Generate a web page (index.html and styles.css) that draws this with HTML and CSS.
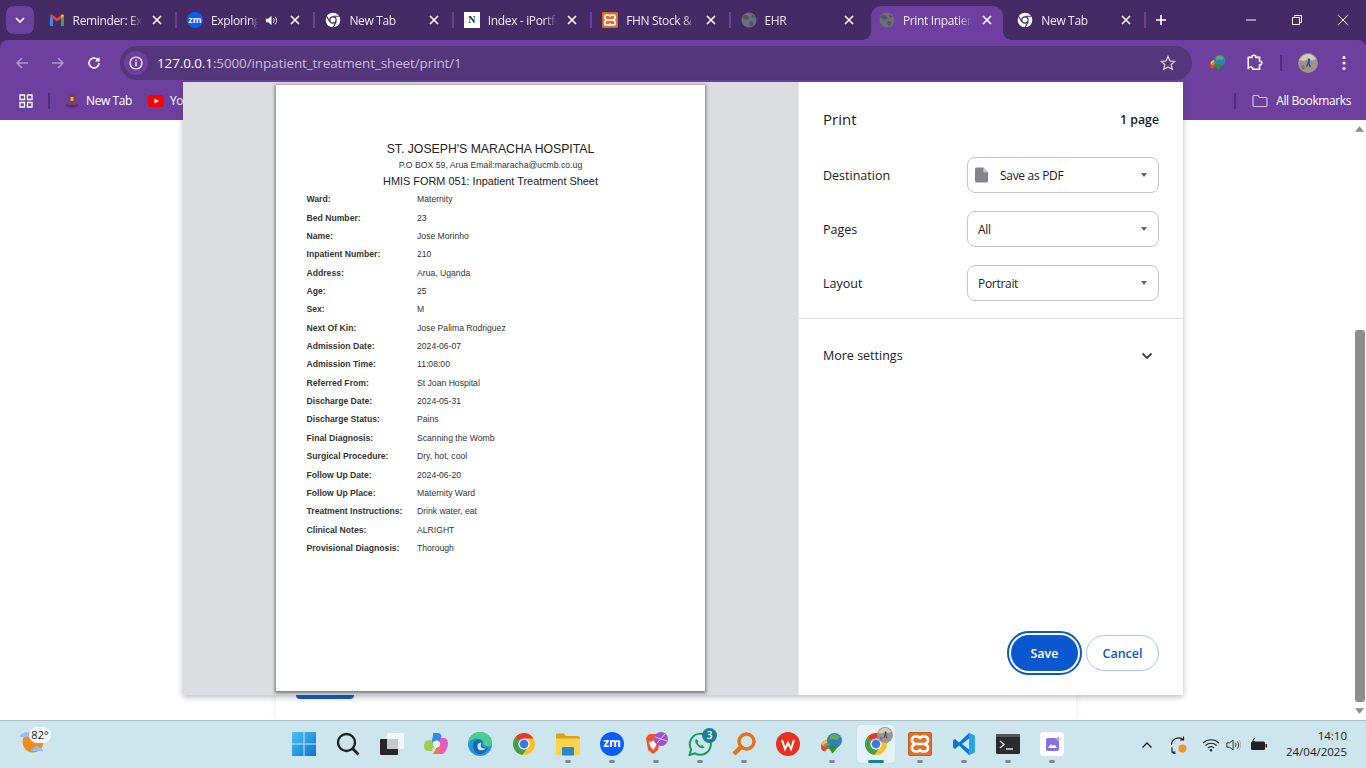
FILE: index.html
```html
<!doctype html>
<html>
 <head>
  <meta charset="UTF-8">
  <title>Print Inpatient Treatment Sheet</title>
  <link rel="stylesheet" href="styles.css">
 </head>
 <body>
  <svg class="defs" width="0" height="0">
   <defs>
    <symbol id="x" viewBox="0 0 12 12"><path d="M2 2l8 8M10 2l-8 8" stroke="currentColor" stroke-width="1.6" fill="none"/></symbol>
    <symbol id="chromeMono" viewBox="0 0 24 24">
     <circle cx="12" cy="12" r="11" fill="#fff"/>
     <path d="M12 6.500h10M7.200 14.800L2.200 6M16.800 14.800l-5 8.700" stroke="#452b66" stroke-width="1.600"/>
     <circle cx="12" cy="12" r="5.600" fill="#452b66"/><circle cx="12" cy="12" r="3.800" fill="#fff"/>
    </symbol>
    <symbol id="chromeColor" viewBox="0 0 24 24">
     <circle cx="12" cy="12" r="11" fill="#fbc02d"/>
     <path d="M12 12L7.240 9.250 3.470 5.100A11 11 0 0 1 21.530 6.500H12z" fill="#e53935"/>
     <path d="M12 12L7.240 9.250 3.470 5.100A11 11 0 0 0 10.400 22.900L14.750 16.760z" fill="#43a047"/>
     <circle cx="12" cy="12" r="5.600" fill="#fff"/><circle cx="12" cy="12" r="4.400" fill="#3b78e7"/>
    </symbol>
    <symbol id="globe" viewBox="0 0 16 16">
     <circle cx="8" cy="8" r="7.500" fill="#6b6f76"/>
     <path d="M4 2.500l3 1.500 1.500 2-2 1.500L3 7 1.500 5.500zM9 9l3.500 1-1 3.500-2 1L8 11zM11 2.500l2.500 2L12 6l-2-1.500z" fill="#452b66" opacity=".45"/>
    </symbol>
    <symbol id="xampp" viewBox="0 0 24 24">
     <rect width="24" height="24" rx="2" fill="#e0702a"/>
     <rect x=".5" y=".5" width="23" height="23" rx="2" fill="none" stroke="#c25d1c"/>
     <path d="M7.500 4.500h1.500c1.800 0 3 1 3 2.800 0-1.800 1.200-2.800 3-2.800h1.500c2 0 3.500 1.500 3.500 3.500 0 2-1.200 3.200-3 4 1.800.8 3 2 3 4 0 2-1.500 3.500-3.500 3.500H15c-1.800 0-3-1-3-2.800 0 1.800-1.200 2.800-3 2.800H7.500C5.500 19.500 4 18 4 16c0-2 1.200-3.200 3-4-1.800-.8-3-2-3-4 0-2 1.500-3.500 3.500-3.500z" fill="none" stroke="#fff" stroke-width="2.500"/>
     <path d="M7.500 12h9" stroke="#fff" stroke-width="2.500"/>
    </symbol>
    <symbol id="idm" viewBox="0 0 24 24">
     <path d="M1 15c0-4 2.500-6.500 6-7l2 9c-2-.5-3.500.5-3.500 2.500C3 19.500 1 18 1 15z" fill="#e5413a"/>
     <path d="M1.800 12c1-2.300 2.800-3.600 5.200-4l.7 3c-2 .2-3.700 1.400-4.400 3.200z" fill="#f6c02c"/>
     <path d="M3.400 14c.7-1.800 2.300-3 4.300-3l.6 2.600c-1.600 0-3 .8-3.400 2.200z" fill="#6db33f"/>
     <circle cx="14.500" cy="8.500" r="7.500" fill="#2f7fc4"/>
     <path d="M10 3.500c3-2 7.500-1.500 10 1.800L17 8l-4-1-3.500 1.500z" fill="#63ad4c"/>
     <path d="M7 13.500h12l-6.500 8z" fill="#23962f"/>
    </symbol>
    <symbol id="avatar" viewBox="0 0 20 20">
     <circle cx="10" cy="10" r="10" fill="#9c958c"/>
     <path d="M1 7c3-4 6-6 9-6 3 0 6 2 8 5l-5 2-3-2-4 2z" fill="#d6c9bd"/>
     <path d="M10.500 5l1.500 1-.5 4 1.500 4h-1.500l-1-3-1.500 3-1-1 1.500-3z" fill="#3d4668"/>
     <path d="M12 6.500l2.500 2-2 2.500z" fill="#5b9bd5"/>
     <path d="M3 13l3-1 1 4-2 1z" fill="#7d746b"/>
    </symbol>
   </defs>
  </svg>

  <!-- tabs -->
  <div class="tabstrip">
   <div class="tabsearch"><svg width="10" height="6" viewBox="0 0 10 6"><path d="M1 1l4 4 4-4" stroke="#fff" stroke-width="1.600" fill="none"/></svg></div>
   <div class="tab">
    <svg class="favicon" viewBox="0 0 16 16"><path d="M1 14V4l3 2v8z" fill="#4285f4"/><path d="M12 14V6l3-2v10z" fill="#34a853"/><path d="M1 4c0-1.500 1.600-2 2.500-1.300L8 6.200l4.500-3.500C13.400 2 15 2.500 15 4l-3 2.400-4 3-4-3z" fill="#ea4335"/><path d="M12 6.400V3.200l.5-.5C13.400 2 15 2.500 15 4z" fill="#fbbc04"/></svg>
    <span class="tabtitle">Reminder: Expiring</span>
    <svg class="close"><use href="#x"/></svg>
   </div>
   <div class="tab">
    <span class="favicon zm">zm</span>
    <span class="tabtitle short">Exploring the</span>
    <svg class="sound" viewBox="0 0 14 14"><path d="M1 5h2.500L7 2v10L3.500 9H1z" fill="#fff"/><path d="M9 4.500c1.200 1.400 1.200 3.600 0 5M11 3c2 2.200 2 5.800 0 8" stroke="#fff" fill="none"/></svg>
    <svg class="close"><use href="#x"/></svg>
   </div>
   <div class="tab">
    <svg class="favicon"><use href="#chromeMono"/></svg>
    <span class="tabtitle">New Tab</span>
    <svg class="close"><use href="#x"/></svg>
   </div>
   <div class="tab">
    <span class="favicon notion">N</span>
    <span class="tabtitle">Index - iPortfolio</span>
    <svg class="close"><use href="#x"/></svg>
   </div>
   <div class="tab">
    <svg class="favicon"><use href="#xampp"/></svg>
    <span class="tabtitle">FHN Stock &amp; Sales</span>
    <svg class="close"><use href="#x"/></svg>
   </div>
   <div class="tab nosep">
    <svg class="favicon"><use href="#globe"/></svg>
    <span class="tabtitle">EHR</span>
    <svg class="close"><use href="#x"/></svg>
   </div>
   <div class="tab active nosep">
    <svg class="favicon"><use href="#globe"/></svg>
    <span class="tabtitle">Print Inpatient</span>
    <svg class="close"><use href="#x"/></svg>
   </div>
   <div class="tab">
    <svg class="favicon"><use href="#chromeMono"/></svg>
    <span class="tabtitle">New Tab</span>
    <svg class="close"><use href="#x"/></svg>
   </div>
   <svg class="newtab" viewBox="0 0 12 12"><path d="M6 1v10M1 6h10" stroke="#fff" stroke-width="1.600"/></svg>
   <div class="winctl">
    <svg viewBox="0 0 12 12"><path d="M1 6h10" stroke="#fff"/></svg>
    <svg viewBox="0 0 12 12"><path d="M1.500 3.500h7v7h-7zM3.500 3.500v-2h7v7h-2" stroke="#fff" fill="none"/></svg>
    <svg viewBox="0 0 12 12"><path d="M1 1l10 10M11 1L1 11" stroke="#fff"/></svg>
   </div>
  </div>

  <!-- address bar -->
  <div class="toolbar">
   <svg class="tool dim" viewBox="0 0 14 14"><path d="M13 7H2M7 2L2 7l5 5" stroke="#fff" stroke-width="1.500" fill="none"/></svg>
   <svg class="tool dim" viewBox="0 0 14 14"><path d="M1 7h11M7 2l5 5-5 5" stroke="#fff" stroke-width="1.500" fill="none"/></svg>
   <svg class="tool" viewBox="0 0 14 14"><path d="M12 7a5 5 0 1 1-1.500-3.600L12 5" stroke="#fff" stroke-width="1.600" fill="none"/><path d="M12.500 1v4.500H8z" fill="#fff"/></svg>
   <div class="omnibox">
    <span class="siteinfo"><svg width="14" height="14" viewBox="0 0 14 14"><circle cx="7" cy="7" r="6" stroke="#fff" stroke-width="1.200" fill="none"/><path d="M7 6v4.200M7 3.600v1.300" stroke="#fff" stroke-width="1.300"/></svg></span>
    <span class="url"><b>127.0.0.1</b>:5000/inpatient_treatment_sheet/print/1</span>
    <svg class="star" viewBox="0 0 16 16"><path d="M8 1.500l2 4.400 4.700.5-3.500 3.200 1 4.700L8 11.900 3.800 14.300l1-4.700L1.300 6.400 6 5.900z" stroke="#d8d0e2" stroke-width="1.300" fill="none"/></svg>
   </div>
   <svg class="ext idmicon"><use href="#idm"/></svg>
   <svg class="ext puzzle" viewBox="0 0 16 16"><path d="M1.500 3.500h3.200c0-2.600 3.600-2.600 3.600 0h3.200v3.200c2.600 0 2.600 3.600 0 3.600v3.700H5.500c0-1.500-1-2-2-2-.8 0-2 .3-2 2z" stroke="#fff" stroke-width="1.400" fill="none" transform="translate(.5 -.5)"/></svg>
   <i class="vsep"></i>
   <svg class="avatar"><use href="#avatar"/></svg>
   <svg class="dots" viewBox="0 0 4 16"><circle cx="2" cy="2.500" r="1.500" fill="#fff"/><circle cx="2" cy="8" r="1.500" fill="#fff"/><circle cx="2" cy="13.500" r="1.500" fill="#fff"/></svg>
  </div>

  <!-- bookmarks -->
  <div class="bookmarks">
   <svg class="apps" viewBox="0 0 14 14"><path d="M1 1h4.500v4.500H1zM8.500 1H13v4.500H8.500zM1 8.500h4.500V13H1zM8.500 8.500H13V13H8.500z" stroke="#fff" stroke-width="1.300" fill="none"/></svg>
   <i class="vsep bm"></i>
   <svg class="bmicon" viewBox="0 0 16 16"><path d="M5 3l3-2 3 2v7l-3 2-3-2z" fill="#8c3b3b"/><path d="M6.500 4h3v4h-3z" fill="#e0b040"/><path d="M1.500 13c3 2 10 2 13 0l-1-2c-3 1.500-8 1.500-11 0z" fill="#5a2f6e"/></svg>
   <span class="bmtext">New Tab</span>
   <svg class="yt" viewBox="0 0 16 12"><rect width="16" height="12" rx="3" fill="#f00"/><path d="M6.500 3.500L11 6l-4.500 2.500z" fill="#fff"/></svg>
   <span class="bmtext">YouTube</span>
   <i class="bmspace"></i>
   <i class="vsep bm2"></i>
   <svg class="folder" viewBox="0 0 16 14"><path d="M1 2.500c0-.5.500-1 1-1h4l1.500 2h6.500c.5 0 1 .5 1 1v7c0 .5-.5 1-1 1H2c-.5 0-1-.5-1-1z" stroke="#cfc6dc" stroke-width="1.200" fill="none"/></svg>
   <span class="bmtext">All Bookmarks</span>
  </div>

  <!-- page under the dialog -->
  <div class="page">
   <div class="pagecard"><div class="pagebtn"></div></div>
   <div class="scrollbar">
    <svg viewBox="0 0 10 6"><path d="M5 0l5 6H0z" fill="#8c8c8c"/></svg>
    <div class="thumb"></div>
    <svg viewBox="0 0 10 6"><path d="M5 6l5-6H0z" fill="#8c8c8c"/></svg>
   </div>
  </div>

  <!-- print dialog -->
  <div class="dialog">
   <div class="preview">
    <div class="sheet">
     <h1>ST. JOSEPH'S MARACHA HOSPITAL</h1>
     <p class="addr">P.O BOX 59, Arua Email:maracha@ucmb.co.ug</p>
     <h2>HMIS FORM 051: Inpatient Treatment Sheet</h2>
     <dl class="fields">
      <dt>Ward:</dt><dd>Maternity</dd>
      <dt>Bed Number:</dt><dd>23</dd>
      <dt>Name:</dt><dd>Jose Morinho</dd>
      <dt>Inpatient Number:</dt><dd>210</dd>
      <dt>Address:</dt><dd>Arua, Uganda</dd>
      <dt>Age:</dt><dd>25</dd>
      <dt>Sex:</dt><dd>M</dd>
      <dt>Next Of Kin:</dt><dd>Jose Palima Rodriguez</dd>
      <dt>Admission Date:</dt><dd>2024-06-07</dd>
      <dt>Admission Time:</dt><dd>11:08:00</dd>
      <dt>Referred From:</dt><dd>St Joan Hospital</dd>
      <dt>Discharge Date:</dt><dd>2024-05-31</dd>
      <dt>Discharge Status:</dt><dd>Pains</dd>
      <dt>Final Diagnosis:</dt><dd>Scanning the Womb</dd>
      <dt>Surgical Procedure:</dt><dd>Dry, hot, cool</dd>
      <dt>Follow Up Date:</dt><dd>2024-06-20</dd>
      <dt>Follow Up Place:</dt><dd>Maternity Ward</dd>
      <dt>Treatment Instructions:</dt><dd>Drink water, eat</dd>
      <dt>Clinical Notes:</dt><dd>ALRIGHT</dd>
      <dt>Provisional Diagnosis:</dt><dd>Thorough</dd>
     </dl>
    </div>
   </div>
   <div class="settings">
    <div class="printhead"><span class="printtitle">Print</span><span class="pagecount">1 page</span></div>
    <div class="setrow">
     <span>Destination</span>
     <div class="select"><svg class="doc" viewBox="0 0 14 16"><path d="M1.500 0H9l5 5v9.500c0 .8-.7 1.500-1.500 1.500h-11C.7 16 0 15.300 0 14.500v-13C0 .7.700 0 1.500 0z" fill="#80868b"/><path d="M9 0v5h5z" fill="#c4c7cb"/></svg><span>Save as PDF</span><i class="caret"></i></div>
    </div>
    <div class="setrow"><span>Pages</span><div class="select"><span>All</span><i class="caret"></i></div></div>
    <div class="setrow"><span>Layout</span><div class="select"><span>Portrait</span><i class="caret"></i></div></div>
    <div class="more">
     <span>More settings</span>
     <svg width="12" height="8" viewBox="0 0 12 8"><path d="M1.500 1.500L6 6l4.500-4.500" stroke="#3c4043" stroke-width="1.800" fill="none"/></svg>
    </div>
    <div class="actions">
     <button class="save">Save</button>
     <button class="cancel">Cancel</button>
    </div>
   </div>
  </div>

  <!-- windows taskbar -->
  <div class="taskbar">
   <div class="weather">
    <svg width="28" height="28" viewBox="0 0 28 28"><circle cx="14" cy="15" r="10.500" fill="#f08c1e"/><path d="M1 10c0-2 1.500-3.500 3.500-3.500 1-2 4-2 5 0 2 0 3 1.500 3 3.500z" fill="#9dbbea"/><path d="M12 24c0-2 1.500-3 3-3 1-2.500 5-2.500 6 0 2 0 3 1.200 3 3z" fill="#9dbbea"/></svg>
    <span class="temp">82°</span>
   </div>
   <div class="taskicons">
    <div class="ti"><svg viewBox="0 0 24 24"><defs><linearGradient id="winblue" x1="0" y1="0" x2="1" y2="1"><stop offset="0" stop-color="#4cc2f5"/><stop offset="1" stop-color="#0a74d0"/></linearGradient></defs><path d="M0 0h11.500v11.500H0zM12.500 0H24v11.500H12.500zM0 12.500h11.500V24H0zM12.500 12.500H24V24H12.500z" fill="url(#winblue)"/></svg></div>
    <div class="ti"><svg viewBox="0 0 24 24"><circle cx="10.500" cy="10.500" r="8.500" stroke="#222" stroke-width="2.400" fill="none"/><path d="M16.500 16.500l6 6" stroke="#222" stroke-width="2.800"/></svg></div>
    <div class="ti"><svg viewBox="0 0 24 24"><rect x="7" y="1" width="17" height="16" rx="1" fill="#f4f7f8"/><rect x="0" y="7" width="18" height="16" rx="1" fill="#262626"/><rect x="7" y="7" width="11" height="10" fill="#c3c8ca"/></svg></div>
    <div class="ti"><svg viewBox="0 0 24 24"><path d="M9 1h5c2 0 3 1 3.500 3L14 15H6l3-11z" fill="#2f8ce8"/><path d="M7 8L3 8.500C1 9 0 12 0 14c0 2 1 5 4 5h4l2-7z" fill="#9ad14f"/><path d="M16 6h4c3 0 4 3 4 6 0 2-1.500 6-3 8-1 1.500-2 2-4 2h-5l4-13z" fill="#e25cc4"/><path d="M9 22l5-9 3 1-2 6c-.5 1-1 2-2 2z" fill="#f6783c"/><circle cx="12.500" cy="12" r="3.600" fill="#f0f4f6"/></svg></div>
    <div class="ti"><svg viewBox="0 0 24 24"><circle cx="12" cy="12" r="12" fill="#1f9ad6"/><path d="M0 12C0 4 7 0 12 0c6 0 12 4 12 11 0 3-3 4-6 3-4-1-1-5-6-7C6 5 1 9 0 12z" fill="#4ecb8f"/><path d="M5 13c0-4 4-6 7-5 3 1 3 4 2 5 0 2 3 3 6 3-2 4-6 7-10 6-3-1-5-5-5-9z" fill="#1565b8"/><path d="M9.500 14c0-2 1.500-3.500 3.500-3.500 1 2-1 3 0 4.500 1 1.500 3 1.500 5 1.500-2 2-6 2.500-7.500 1-1-1-1-2.500-1-3.500z" fill="#cde5ec"/></svg></div>
    <div class="ti"><svg><use href="#chromeColor"/></svg></div>
    <div class="ti on"><svg viewBox="0 0 24 24"><path d="M0 3c0-.8.700-1.500 1.500-1.500h6.500L10 4h12c1 0 2 1 2 2v2H0z" fill="#d9a31a"/><path d="M0 6.500h24V22c0 .8-.7 1.500-1.500 1.500h-21C.7 23.500 0 22.800 0 22z" fill="#fcd34d"/><rect x="6" y="15" width="12" height="8.500" rx="1" fill="#2e86d6"/></svg></div>
    <div class="ti on"><span class="zmbig">zm</span></div>
    <div class="ti on"><svg viewBox="0 0 24 24"><path d="M2 6l3-4h7l2 2 2 3-2 11-5 4-5-4z" fill="#f1532a"/><path d="M5 9l2.500 1L9 8l1.500 2 2.500-1-1 5-3 4-3-4z" fill="#fff"/><circle cx="17" cy="7" r="7" fill="#9d55c9"/><path d="M11 5l12 4M21 2l-8 9" stroke="#e8d8f0" stroke-width=".8"/></svg></div>
    <div class="ti on"><svg viewBox="0 0 24 24"><path d="M1.500 23l1.600-5.700A10.500 10.500 0 1 1 7 21.300z" stroke="#179a5e" stroke-width="2" fill="none"/><path d="M8 7c-1.500 1.500-1 4 1.500 6.500S14.500 17 16.500 15.500l-2.500-2.500-1.500 1-3-3 1-1.500L8.500 7z" fill="#179a5e"/></svg><span class="badge">3</span></div>
    <div class="ti on"><svg viewBox="0 0 24 24"><circle cx="14.500" cy="9.500" r="7.500" stroke="#e5731c" stroke-width="3.400" fill="none"/><path d="M8.500 15.500L2 22" stroke="#e5731c" stroke-width="4.400"/></svg></div>
    <div class="ti"><svg viewBox="0 0 24 24"><circle cx="12" cy="12" r="12" fill="#e8321f"/><path d="M6 8l3 9 3-6 3 6 3-9" stroke="#fff" stroke-width="2" fill="none"/></svg></div>
    <div class="ti on"><svg><use href="#idm"/></svg></div>
    <div class="ti current"><svg><use href="#chromeColor"/></svg><svg class="avatarbadge"><use href="#avatar"/></svg></div>
    <div class="ti on"><svg><use href="#xampp"/></svg></div>
    <div class="ti on"><svg viewBox="0 0 24 24"><path d="M17 1l6 3v16l-6 3L7 13.500l-4 3.500-2-1.500V8.500L3 7l4 3.500z" fill="#0a78d2"/><path d="M17 6.500L10 12l7 5.500z" fill="#cde5ec"/><path d="M17 1l6 3v16l-6 3z" fill="#29a3ea"/></svg></div>
    <div class="ti on"><svg viewBox="0 0 24 24"><rect y="2" width="24" height="20" rx="1.500" fill="#2b2b2b"/><rect y="2" width="24" height="3" fill="#555"/><path d="M4 9l4 3.500-4 3.500" stroke="#ddd" stroke-width="1.500" fill="none"/><path d="M10 17h7" stroke="#ddd" stroke-width="1.500"/></svg></div>
    <div class="ti on"><svg viewBox="0 0 24 24"><rect width="24" height="24" rx="4" fill="#fff"/><rect x="6" y="6" width="13" height="13" rx="2" fill="#8b6fe0"/><path d="M8 16l3-4 2 2 1.500-1.500L17 16z" fill="#fff"/><path d="M18 4l1 2 2 1-2 1-1 2-1-2-2-1 2-1z" fill="#b9a4ef"/></svg></div>
   </div>
   <div class="tray">
    <svg class="chev" viewBox="0 0 12 8"><path d="M1.500 6.500L6 2l4.500 4.500" stroke="#222" stroke-width="1.400" fill="none"/></svg>
    <svg class="sync" viewBox="0 0 20 20"><path d="M2.500 10a7 7 0 0 1 12-5M14.500 1.500V5H11M3 12.500V17h3.500M3 17c1 1 2 1.500 3.500 1.500" stroke="#222" stroke-width="1.200" fill="none"/><circle cx="13.500" cy="13.500" r="4" fill="#f7931e"/></svg>
    <svg class="wifi" viewBox="0 0 18 14"><path d="M1 5a11.500 11.500 0 0 1 16 0M3.500 7.500a8 8 0 0 1 11 0M6 10a4.400 4.400 0 0 1 6 0" stroke="#222" stroke-width="1.100" fill="none"/><circle cx="9" cy="12.300" r="1.200" fill="#222"/></svg>
    <svg class="vol" viewBox="0 0 18 14"><path d="M1 4.500h3L8 1.500v11L4 9.500H1z" stroke="#222" fill="none"/><path d="M10.500 4.500c1 1.500 1 3.500 0 5M13 3c1.500 2.500 1.500 5.500 0 8" stroke="#222" fill="none"/><path d="M15 1.500c2 3.500 2 7.500 0 11" stroke="#aaa" fill="none"/></svg>
    <svg class="batt" viewBox="0 0 18 13"><rect x="1" y="3.500" width="14" height="8.500" rx="1.500" fill="#222"/><path d="M15.500 6h1.500v3.500h-1.500z" fill="#222"/><path d="M4.500 0L2.500 3.500h2.500L3 7" stroke="#222" fill="none"/></svg>
    <div class="clock"><span>14:10</span><span>24/04/2025</span></div>
   </div>
  </div>
 </body>
</html>
```

FILE: styles.css
```css
*{
	margin:0;
	padding:0;
	box-sizing:border-box;
}
html,body{
	width:1366px;
	height:768px;
	overflow:hidden;
}
body{
	position:relative;
	display:flex;
	flex-direction:column;
	background-color:#452b66;
	font-family:"Open Sans","Noto Sans",sans-serif;
	font-size:12px;
	color:#fff;
}
.defs{
	position:absolute;
}

/* tabs */
.tabstrip{
	display:flex;
	align-items:center;
	flex:none;
	height:40px;
	padding-left:6px;
}
.tabsearch{
	display:flex;
	align-items:center;
	justify-content:center;
	flex:none;
	width:28px;
	height:28px;
	margin-right:3.6px;
	border-radius:8px;
	background-color:#6d409f;
}
.tab{
	position:relative;
	display:flex;
	align-items:center;
	flex:none;
	width:138.4px;
	height:40px;
	padding:0 13px 0 11px;
}
.tab::after{
	content:"";
	position:absolute;
	right:-1px;
	top:12px;
	width:2px;
	height:16px;
	background-color:#6d409f;
}
.tab.nosep::after{
	display:none;
}
.tab.active::before{
	content:"";
	position:absolute;
	left:3px;
	right:3px;
	top:6px;
	bottom:0;
	border-radius:10px 10px 0 0;
	background-color:#6d409f;
}
/* little flares at the foot of the active tab */
.tab.active::after{
	display:block;
	left:-5px;
	right:-5px;
	top:auto;
	bottom:0;
	width:auto;
	height:8px;
	background:
		radial-gradient(circle at 0 0,transparent 7.5px,#6d409f 8px) left bottom/8px 8px no-repeat,
		radial-gradient(circle at 100% 0,transparent 7.5px,#6d409f 8px) right bottom/8px 8px no-repeat;
}
.tab.active>*{
	position:relative;
}
.tab.active .tabtitle{
	-webkit-mask-image:linear-gradient(90deg,#000 80%,transparent);
}
.favicon{
	flex:none;
	width:16px;
	height:16px;
	margin-right:8px;
}
.zm{
	border-radius:50%;
	background-color:#0b5cff;
	font-size:9px;
	font-weight:700;
	line-height:15px;
	text-align:center;
}
.notion{
	background-color:#fff;
	color:#333;
	font-family:"Liberation Serif",serif;
	font-size:10px;
	font-weight:700;
	line-height:16px;
	text-align:center;
}
.tabtitle{
	flex:1;
	min-width:0;
	margin-right:9px;
	overflow:hidden;
	white-space:nowrap;
	font-size:12px;
	letter-spacing:-.35px;
	color:#efe9f5;
	-webkit-mask-image:linear-gradient(90deg,#000 82%,transparent);
}
.tabtitle.short{
	margin-right:7px;
}
.sound{
	flex:none;
	width:13px;
	height:13px;
	margin-right:11px;
}
.close{
	flex:none;
	width:12px;
	height:12px;
	color:#fff;
}
.newtab{
	flex:none;
	width:12px;
	height:12px;
	margin-left:10.500px;
}
.winctl{
	display:flex;
	align-items:center;
	margin-left:auto;
	margin-right:17px;
	gap:34px;
}
.winctl svg{
	width:12px;
	height:12px;
}

/* address bar */
.toolbar{
	display:flex;
	align-items:center;
	flex:none;
	height:41px;
	padding:5px 0 1px 15px;
	border-radius:8px 8px 0 0;
	background-color:#6d409f;
}
.tool{
	flex:none;
	width:14px;
	height:14px;
	margin-right:22px;
}
.tool.dim{
	opacity:.45;
}
.omnibox{
	display:flex;
	align-items:center;
	flex:none;
	width:1072px;
	height:34px;
	margin-left:-3px;
	padding:0 16px 0 4px;
	border-radius:17px;
	background-color:#54367a;
}
.siteinfo{
	display:flex;
	align-items:center;
	justify-content:center;
	flex:none;
	width:24px;
	height:24px;
	margin-right:9px;
	border-radius:50%;
	background-color:#6d409f;
}
.url{
	font-size:13.500px;
	letter-spacing:-.12px;
	color:#c9bcdb;
}
.url b{
	font-weight:400;
	color:#fff;
}
.star{
	width:16px;
	height:16px;
	margin-left:auto;
}
.ext{
	flex:none;
	width:18px;
	height:18px;
}
.idmicon{
	margin-left:17px;
}
.puzzle{
	margin-left:19px;
}
.vsep{
	flex:none;
	width:2px;
	height:16px;
	margin-left:16px;
	background-color:#4e2f78;
}
.avatar{
	flex:none;
	width:20px;
	height:20px;
	margin-left:16px;
}
.dots{
	flex:none;
	width:4px;
	height:16px;
	margin-left:24px;
}

/* bookmarks */
.bookmarks{
	display:flex;
	align-items:center;
	flex:none;
	height:39px;
	padding-left:19px;
	background-color:#6d409f;
}
.apps{
	flex:none;
	width:14px;
	height:14px;
}
.vsep.bm{
	margin-left:15px;
}
.bmicon{
	flex:none;
	width:16px;
	height:16px;
	margin:0 6px 0 14px;
}
.bmtext{
	font-size:12px;
	letter-spacing:-.4px;
	white-space:nowrap;
}
.yt{
	flex:none;
	width:16px;
	height:12px;
	margin:0 6px 0 16px;
}
.bmspace{
	flex:1;
}
.vsep.bm2{
	margin:0 16px 0 0;
}
.folder{
	flex:none;
	width:16px;
	height:14px;
	margin-right:8px;
}
.bookmarks .bmtext:last-child{
	margin-right:15px;
}

/* page under the dialog */
.page{
	display:flex;
	flex:1;
	min-height:0;
	background-color:#fff;
}
.pagecard{
	flex:none;
	width:800px;
	margin-left:276px;
	padding:0 0 21px 20px;
	display:flex;
	align-items:flex-end;
	box-shadow:0 0 8px rgba(0,0,0,.08);
}
.pagebtn{
	width:58px;
	height:30px;
	border-radius:4px;
	background-color:#0b57d0;
}
.scrollbar{
	display:flex;
	flex-direction:column;
	align-items:center;
	flex:none;
	width:13px;
	margin-left:auto;
	padding-top:6px;
}
.scrollbar svg{
	flex:none;
	width:9px;
	height:6px;
}
.thumb{
	flex:none;
	width:10px;
	height:372px;
	margin:198px 0 6px;
	border-radius:3px;
	background-color:#8c8c8c;
}

/* print dialog */
.dialog{
	position:absolute;
	left:183px;
	top:82px;
	display:flex;
	width:1000px;
	height:613px;
	background-color:#fff;
	box-shadow:0 2px 6px rgba(60,64,67,.35);
	color:#202124;
}
.preview{
	display:flex;
	align-items:flex-start;
	justify-content:center;
	flex:none;
	width:615px;
	padding-top:3px;
	background-color:#dadce0;
}
.sheet{
	flex:none;
	width:429px;
	height:606px;
	padding:56px 0 0 30.500px;
	background-color:#fff;
	box-shadow:0 1px 3px 1px rgba(60,64,67,.65);
	font-family:"Liberation Sans",Arial,sans-serif;
	color:#333;
}
.sheet h1,.sheet h2,.addr{
	margin-left:-30.500px;
	font-weight:400;
	line-height:16px;
	text-align:center;
}
.sheet h1{
	font-size:12.250px;
	color:#222;
}
.addr{
	font-size:8.700px;
}
.sheet h2{
	font-size:10.900px;
	color:#222;
}
.fields{
	display:grid;
	grid-template-columns:110.500px 1fr;
	grid-auto-rows:18.370px;
	align-items:center;
	margin-top:1px;
	font-size:8.650px;
}
.fields dt{
	font-weight:700;
	white-space:nowrap;
}
.settings{
	display:flex;
	flex-direction:column;
	flex:1;
	border-left:1px solid #e3e4e6;
	font-size:12.500px;
}
.printhead{
	display:flex;
	align-items:center;
	justify-content:space-between;
	height:36px;
	margin:19px 24px 20px;
}
.printtitle{
	font-size:15px;
}
.pagecount{
	font-weight:600;
	font-size:12.300px;
}
.setrow{
	display:flex;
	align-items:center;
	justify-content:space-between;
	height:36px;
	margin:0 24px 18px;
}
.select{
	display:flex;
	align-items:center;
	width:192px;
	height:36px;
	padding:0 10px;
	border:1px solid #c7c7c7;
	border-radius:8px;
	font-size:12px;
	letter-spacing:-.3px;
}
.doc{
	flex:none;
	width:13px;
	height:16px;
	margin:0 12px 0 -3px;
}
.caret{
	width:0;
	height:0;
	margin-left:auto;
	margin-right:1px;
	border:3.500px solid transparent;
	border-top:4px solid #5f6368;
	border-bottom:0;
}
.more{
	display:flex;
	align-items:center;
	justify-content:space-between;
	height:74px;
	margin-top:-1px;
	padding:0 30px 0 24px;
	border-top:1px solid #e3e4e6;
}
.actions{
	display:flex;
	align-items:center;
	justify-content:flex-end;
	gap:8px;
	margin-top:auto;
	padding:0 24px 24px;
}
.actions button{
	width:73px;
	height:36px;
	border-radius:18px;
	font-family:inherit;
	font-size:12.500px;
	font-weight:600;
}
.actions .save{
	width:67px;
	border:0;
	background-color:#0b57d0;
	color:#fff;
	outline:2px solid #0b57d0;
	outline-offset:2px;
}
.cancel{
	border:1px solid #a8c7fa;
	background-color:#fff;
	color:#0b57d0;
}

/* taskbar */
.taskbar{
	position:relative;
	display:flex;
	align-items:center;
	flex:none;
	height:48px;
	border-top:1px solid #a9bec5;
	background-color:#cde5ec;
	color:#1b1b1b;
}
.weather{
	position:absolute;
	left:19px;
	top:6px;
	width:34px;
	height:30px;
}
.temp{
	position:absolute;
	left:10px;
	top:0;
	width:22px;
	height:16px;
	border-radius:8px;
	background-color:#f3f8fa;
	font-size:11px;
	line-height:16px;
	text-align:center;
}
.taskicons{
	display:flex;
	align-items:center;
	margin-left:282px;
}
.ti{
	position:relative;
	display:flex;
	align-items:center;
	justify-content:center;
	flex:none;
	width:44px;
	height:38px;
	margin-top:-1px;
}
.ti>svg:first-child{
	width:24px;
	height:24px;
}
.ti.on::after,.ti.current::after{
	content:"";
	position:absolute;
	left:19px;
	bottom:0;
	width:6px;
	height:3px;
	border-radius:2px;
	background-color:#7b8a8f;
}
.ti.current{
	width:38px;
	margin:-1px 3px 0;
	border-radius:4px;
	background-color:#e3f2f6;
	box-shadow:0 0 1px rgba(0,0,0,.15);
}
.ti.current::after{
	left:11px;
	width:16px;
	background-color:#1a7f96;
}
.avatarbadge{
	position:absolute;
	right:2px;
	top:2px;
	width:16px;
	height:16px;
}
.zmbig{
	width:24px;
	height:24px;
	border-radius:50%;
	background-color:#0b5cff;
	color:#fff;
	font-size:12px;
	font-weight:700;
	line-height:22px;
	text-align:center;
}
.badge{
	position:absolute;
	right:5px;
	top:3px;
	width:15px;
	height:15px;
	border-radius:50%;
	background-color:#1a7f96;
	color:#fff;
	font-size:10px;
	font-weight:600;
	line-height:15px;
	text-align:center;
}
.tray{
	display:flex;
	align-items:center;
	margin-left:auto;
	margin-right:19px;
}
.chev{
	width:12px;
	height:8px;
}
.sync{
	width:20px;
	height:20px;
	margin-left:16px;
}
.wifi{
	width:18px;
	height:14px;
	margin-left:13px;
}
.vol{
	width:16px;
	height:14px;
	margin-left:6px;
}
.batt{
	width:18px;
	height:13px;
	margin-left:8px;
}
.clock{
	display:flex;
	flex-direction:column;
	align-items:flex-end;
	margin-left:18px;
	margin-top:-1px;
	font-size:11.500px;
	line-height:16px;
}
```
